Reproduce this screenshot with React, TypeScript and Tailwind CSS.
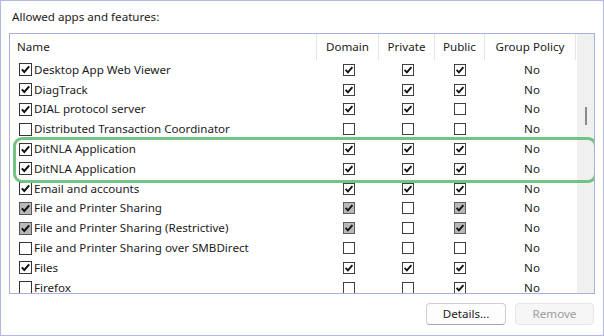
import React from "react";

type S = "on" | "off" | "grey";

function Box({ s, size = 12 }: { s: S; size?: number }) {
  const fill = s === "grey" ? "#b8b8b8" : "#ffffff";
  const stroke = s === "grey" ? "#555555" : "#333333";
  return (
    <svg width={size} height={size} viewBox="0 0 13 13" className="shrink-0">
      <rect x="0.5" y="0.5" width="12" height="12" fill={fill} stroke={stroke} strokeWidth="1" />
      {s !== "off" && (
        <path d="M2.8 6.4 L5.3 9 L10.2 3.4" fill="none" stroke="#111" strokeWidth="2" />
      )}
    </svg>
  );
}

const rows: { name: string; n: S; d: S; p: S; u: S }[] = [
  { name: "Desktop App Web Viewer", n: "on", d: "on", p: "on", u: "on" },
  { name: "DiagTrack", n: "on", d: "on", p: "on", u: "on" },
  { name: "DIAL protocol server", n: "on", d: "on", p: "on", u: "off" },
  { name: "Distributed Transaction Coordinator", n: "off", d: "off", p: "off", u: "off" },
  { name: "DitNLA Application", n: "on", d: "on", p: "on", u: "on" },
  { name: "DitNLA Application", n: "on", d: "on", p: "on", u: "on" },
  { name: "Email and accounts", n: "on", d: "on", p: "on", u: "on" },
  { name: "File and Printer Sharing", n: "grey", d: "grey", p: "off", u: "grey" },
  { name: "File and Printer Sharing (Restrictive)", n: "grey", d: "grey", p: "off", u: "grey" },
  { name: "File and Printer Sharing over SMBDirect", n: "off", d: "off", p: "off", u: "off" },
  { name: "Files", n: "on", d: "on", p: "on", u: "on" },
  { name: "Firefox", n: "off", d: "off", p: "off", u: "on" },
];

export default function App() {
  return (
    <div
      className="w-[604px] h-[336px] bg-white border border-[#b4b8e2] flex flex-col text-[11.6px] text-[#1b1b1b] overflow-hidden"
      style={{ fontFamily: '"Noto Sans", "Open Sans", sans-serif' }}
    >
      <div className="pl-[11px] pt-[7px] h-[32px] leading-[18px]">Allowed apps and features:</div>
      <div className="ml-[8px] w-[586px] h-[261px] border border-[#a9b0dc] flex relative overflow-hidden">
        <div className="flex-1 flex flex-col">
          <div className="flex h-[26px] shrink-0 items-center leading-[16px]">
            <div className="w-[307px] h-full flex items-center pl-[7px] border-r border-[#e5e5e5]">Name</div>
            <div className="w-[62px] h-full flex items-center justify-center border-r border-[#e5e5e5]">Domain</div>
            <div className="w-[56px] h-full flex items-center justify-center border-r border-[#e5e5e5]">Private</div>
            <div className="w-[50px] h-full flex items-center justify-center border-r border-[#e5e5e5]">Public</div>
            <div className="w-[91px] h-full flex items-center justify-center border-r border-[#e5e5e5]">Group Policy</div>
          </div>
          {rows.map((r, i) => (
            <div key={i} className="flex h-[19.8px] shrink-0 items-center leading-[16px]">
              <div className="w-[307px] flex items-center pl-[9px] gap-[2px] whitespace-nowrap">
                <Box s={r.n} size={13} />
                <span>{r.name}</span>
              </div>
              <div className="w-[62px] flex justify-center pl-[2px]"><Box s={r.d} /></div>
              <div className="w-[56px] flex justify-center pl-[2px]"><Box s={r.p} /></div>
              <div className="w-[50px] flex justify-center"><Box s={r.u} /></div>
              <div className="w-[91px] flex justify-center pl-[3px]">No</div>
            </div>
          ))}
        </div>
        <div className="w-[17px] h-full bg-[#f0f0f0] flex justify-center">
          <div className="w-[2px] h-[18px] mt-[73px] bg-[#8a8a8a]" />
        </div>
        <div className="absolute left-[3px] top-[103px] w-[584px] h-[46px] border-[3px] border-[#74c286] rounded-[9px] pointer-events-none" />
      </div>
      <div className="flex justify-end gap-[9px] pr-[9px] pt-[9px]">
        <div className="w-[80px] h-[22px] rounded-[4px] border border-[#cfcfcf] border-b-[#a8a8a8] bg-[#fdfdfd] flex items-center justify-center">
          Details...
        </div>
        <div className="w-[79px] h-[22px] rounded-[4px] border border-[#e6e6e6] bg-[#f6f6f6] text-[#9d9d9d] flex items-center justify-center">
          Remove
        </div>
      </div>
    </div>
  );
}
